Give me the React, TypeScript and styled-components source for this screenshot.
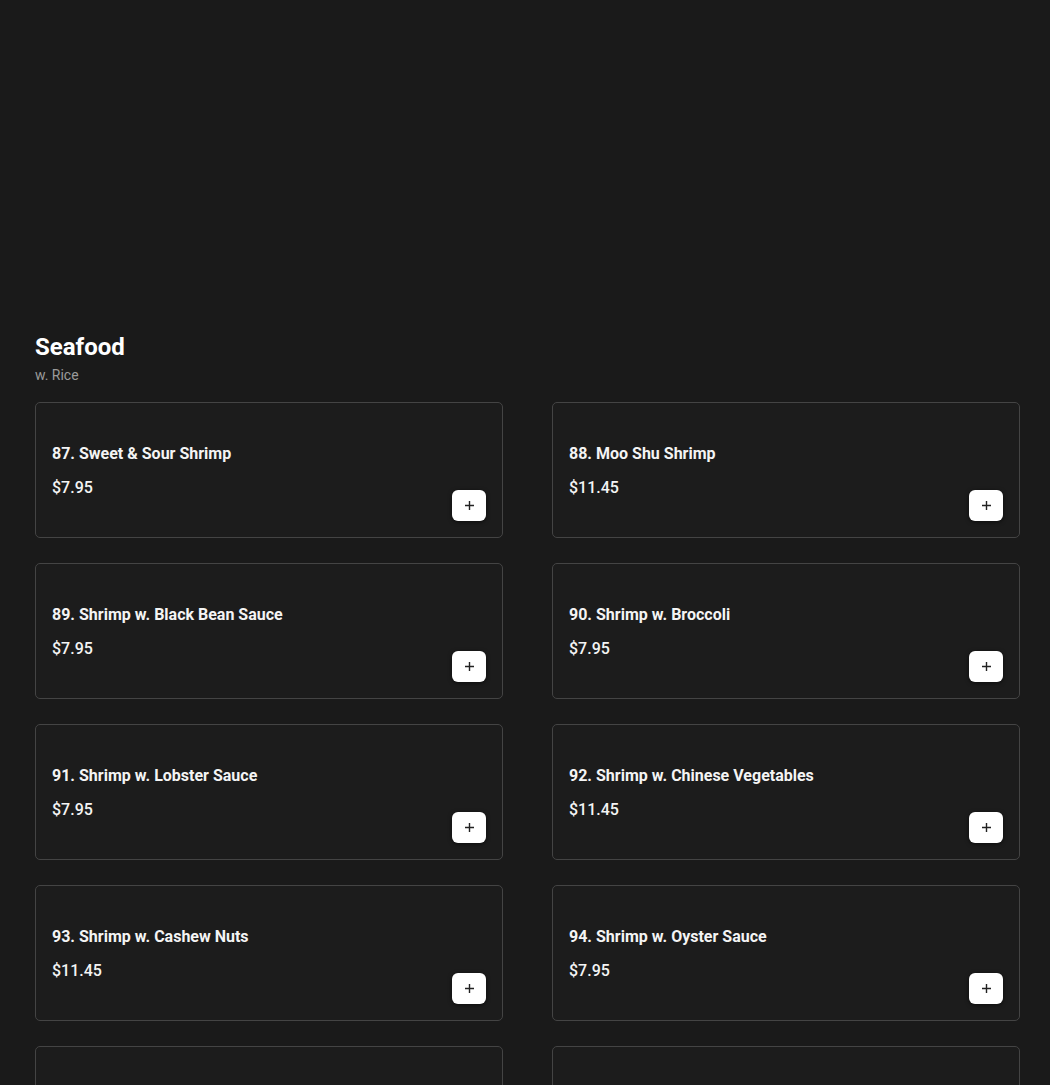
import * as React from 'react';
import styled, { createGlobalStyle } from 'styled-components';

type Item = { no: number; name: string; price: string };

const items: Item[] = [
  { no: 87, name: 'Sweet & Sour Shrimp', price: '$7.95' },
  { no: 88, name: 'Moo Shu Shrimp', price: '$11.45' },
  { no: 89, name: 'Shrimp w. Black Bean Sauce', price: '$7.95' },
  { no: 90, name: 'Shrimp w. Broccoli', price: '$7.95' },
  { no: 91, name: 'Shrimp w. Lobster Sauce', price: '$7.95' },
  { no: 92, name: 'Shrimp w. Chinese Vegetables', price: '$11.45' },
  { no: 93, name: 'Shrimp w. Cashew Nuts', price: '$11.45' },
  { no: 94, name: 'Shrimp w. Oyster Sauce', price: '$7.95' },
  { no: 95, name: 'Shrimp w. Garlic Sauce', price: '$7.95' },
  { no: 96, name: 'Kung Po Shrimp', price: '$7.95' },
];

const GlobalStyle = createGlobalStyle`
  html, body {
    margin: 0;
    padding: 0;
    background: #1a1a1a;
    font-family: Roboto, "Liberation Sans", sans-serif;
    color: #fff;
  }
`;

const PlusIcon = () => (
  <svg width="11" height="11" viewBox="0 0 11 11" fill="none">
    <path d="M5.5 1v9M1 5.5h9" stroke="#222" strokeWidth="1.4" />
  </svg>
);

const MenuCard = ({ item }: { item: Item }) => (
  <Card>
    <Info>
      <Name>
        {item.no}. {item.name}
      </Name>
      <Price>{item.price}</Price>
    </Info>
    <AddButton aria-label="Add">
      <PlusIcon />
    </AddButton>
  </Card>
);

const App = () => (
  <>
    <GlobalStyle />
    <Page>
      <Section>
        <Header>
          <Title>Seafood</Title>
          <Subtitle>w. Rice</Subtitle>
        </Header>
        <Grid>
          {items.map(item => (
            <MenuCard key={item.no} item={item} />
          ))}
        </Grid>
      </Section>
    </Page>
  </>
);

const Page = styled.div`
  height: 1085px;
  overflow: hidden;
  padding: 334px 30px 0 35px;
  box-sizing: border-box;
`;

const Section = styled.section`
  display: flex;
  flex-direction: column;
`;

const Header = styled.div`
  display: flex;
  flex-direction: column;
  margin-bottom: 18px;
`;

const Title = styled.h2`
  margin: 0;
  font-size: 24px;
  line-height: 26px;
  font-weight: 700;
  color: #fff;
`;

const Subtitle = styled.p`
  margin: 7px 0 0;
  font-size: 14px;
  line-height: 17px;
  color: #9a9a9a;
`;

const Grid = styled.div`
  display: grid;
  grid-template-columns: 468px 468px;
  column-gap: 49px;
  row-gap: 25px;
`;

const Card = styled.div`
  box-sizing: border-box;
  height: 136px;
  border: 1px solid #444;
  border-radius: 5px;
  padding: 16px;
  display: flex;
  justify-content: space-between;
  align-items: center;
  background: #1c1c1c;
`;

const Info = styled.div`
  display: flex;
  flex-direction: column;
  gap: 14px;
  padding-top: 2px;
`;

const Name = styled.div`
  font-size: 16px;
  line-height: 20px;
  font-weight: 700;
  color: #f4f4f4;
`;

const Price = styled.div`
  font-size: 16px;
  line-height: 20px;
  font-weight: 500;
  color: #f4f4f4;
`;

const AddButton = styled.button`
  align-self: flex-end;
  width: 34px;
  height: 31px;
  padding: 0;
  border: none;
  border-radius: 6px;
  background: #fff;
  box-shadow: 0 1px 4px rgba(0, 0, 0, 0.6);
  display: flex;
  align-items: center;
  justify-content: center;
  cursor: pointer;
`;

export default App;
